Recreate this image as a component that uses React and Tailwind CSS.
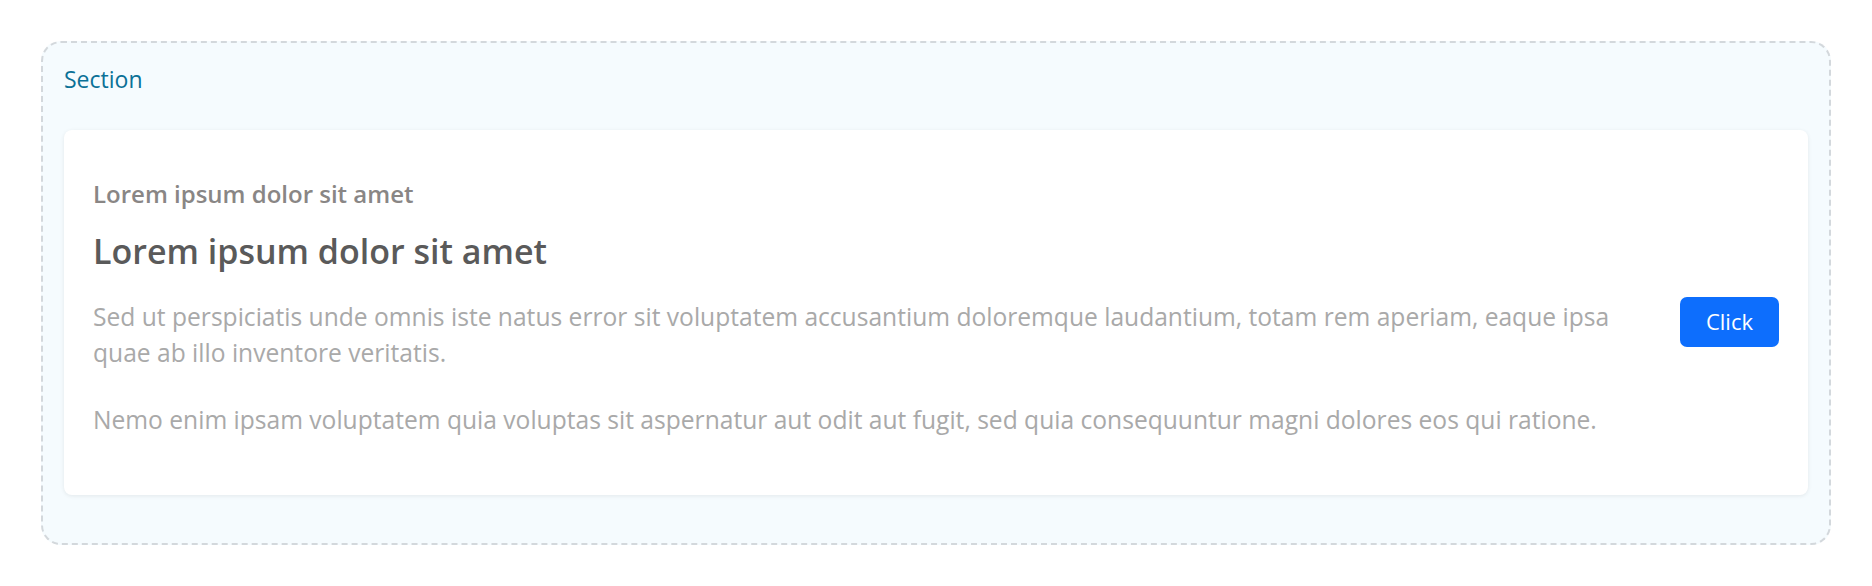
export default function App() {
  return (
    <div className="bg-white p-[41px]" style={{ fontFamily: '"Open Sans", "Noto Sans", sans-serif' }}>
      {/* Section wrapper */}
      <section className="rounded-[20px] border-2 border-dashed border-[#d3d8dc] bg-[#f5fbfe] px-[21px] pt-[20px] pb-[48px]">
        <h2 className="text-[23px] leading-[33px] text-[#0b7197] mb-[34px]">Section</h2>

        {/* Card */}
        <div className="flex items-center gap-[56px] rounded-lg bg-white pl-[29px] pr-[29px] pt-[50px] pb-[57px] shadow-[0_1px_4px_rgba(0,0,0,0.08)]">
          <div className="flex-1">
            <h4 className="text-[24px] leading-[27.6px] font-semibold text-[#898685]">Lorem ipsum dolor sit amet</h4>
            <h3 className="mt-[23px] text-[34px] leading-[40.8px] font-semibold text-[#5a5a5a]">Lorem ipsum dolor sit amet</h3>
            <p className="mt-[28px] text-[24.6px] leading-[36px] text-[#a9a9a9]">
              Sed ut perspiciatis unde omnis iste natus error sit voluptatem accusantium doloremque laudantium, totam rem aperiam, eaque ipsa quae ab illo inventore veritatis.
            </p>
            <p className="mt-[31px] text-[24.6px] leading-[36px] text-[#a9a9a9]">
              Nemo enim ipsam voluptatem quia voluptas sit aspernatur aut odit aut fugit, sed quia consequuntur magni dolores eos qui ratione.
            </p>
          </div>
          <button className="mt-[25px] h-[50px] rounded-[7px] bg-[#0d6efd] px-[26px] text-[22px] text-white">Click</button>
        </div>
      </section>
    </div>
  )
}
